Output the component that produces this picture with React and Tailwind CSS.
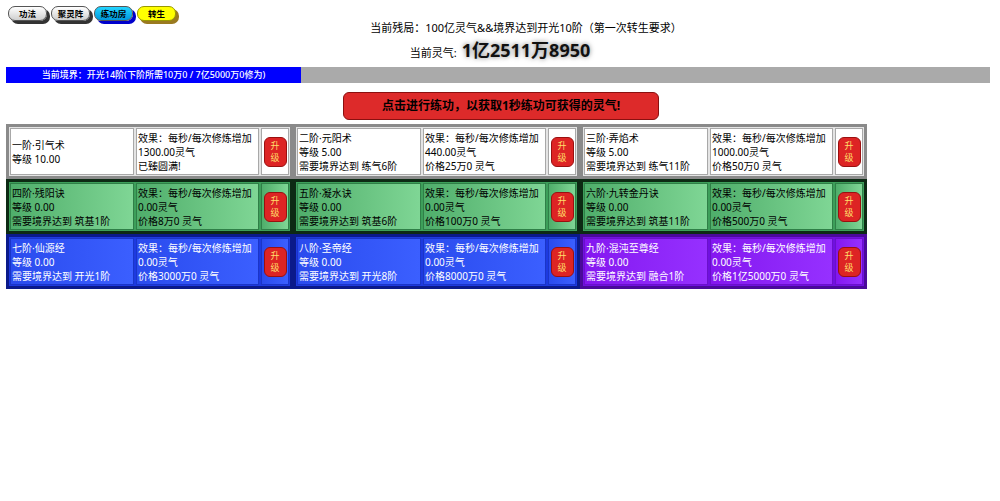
const themes = {
  white: {
    card: "border-[#8a8a8a] bg-[#e4e4e4]",
    cell: "border-[#a8a8a8] bg-white text-black",
  },
  green: {
    card: "border-[#0d2a14] bg-[#3d9f5a]",
    cell: "border-[#2f7f47] bg-gradient-to-r from-[#4fae6b] to-[#7fd695] text-black",
  },
  blue: {
    card: "border-[#0b1a8a] bg-[#1d3ae0]",
    cell: "border-[#1a35c8] bg-gradient-to-r from-[#2a4bee] to-[#3b5fff] text-white",
  },
  purple: {
    card: "border-[#4a0a9a] bg-[#7010e0]",
    cell: "border-[#6a10cc] bg-gradient-to-r from-[#8416f0] to-[#9630ff] text-white",
  },
};

const skills = [
  { name: "一阶·引气术", level: "10.00", effect: "1300.00灵气", last: "已臻圆满!", theme: "white" },
  { name: "二阶·元阳术", level: "5.00", need: "练气6阶", effect: "440.00灵气", last: "价格25万0 灵气", theme: "white" },
  { name: "三阶·弄焰术", level: "5.00", need: "练气11阶", effect: "1000.00灵气", last: "价格50万0 灵气", theme: "white" },
  { name: "四阶·残阳诀", level: "0.00", need: "筑基1阶", effect: "0.00灵气", last: "价格8万0 灵气", theme: "green" },
  { name: "五阶·凝水诀", level: "0.00", need: "筑基6阶", effect: "0.00灵气", last: "价格100万0 灵气", theme: "green" },
  { name: "六阶·九转金丹诀", level: "0.00", need: "筑基11阶", effect: "0.00灵气", last: "价格500万0 灵气", theme: "green" },
  { name: "七阶·仙源经", level: "0.00", need: "开光1阶", effect: "0.00灵气", last: "价格3000万0 灵气", theme: "blue" },
  { name: "八阶·圣帝经", level: "0.00", need: "开光8阶", effect: "0.00灵气", last: "价格8000万0 灵气", theme: "blue" },
  { name: "九阶·混沌至尊经", level: "0.00", need: "融合1阶", effect: "0.00灵气", last: "价格1亿5000万0 灵气", theme: "purple" },
];

function NavButton({ label, className }) {
  return (
    <button
      type="button"
      className={`h-[15px] w-[39px] rounded-[7px] border border-[#555] text-[8.5px] font-bold leading-[13px] ${className}`}
    >
      {label}
    </button>
  );
}

function SkillCard({ skill }) {
  const t = themes[skill.theme];
  return (
    <div className={`flex h-[55px] w-[287px] gap-[2px] border-[3px] p-[1px] ${t.card}`}>
      <div className={`flex w-[124px] flex-col justify-center border px-[1px] ${t.cell}`}>
        <p>{skill.name}</p>
        <p>等级 {skill.level}</p>
        {skill.need && <p>需要境界达到 {skill.need}</p>}
      </div>
      <div className={`flex w-[123px] flex-col justify-center overflow-hidden whitespace-nowrap border px-[1px] ${t.cell}`}>
        <p>效果：每秒/每次修炼增加</p>
        <p>{skill.effect}</p>
        <p>{skill.last}</p>
      </div>
      <div className={`flex flex-1 items-center justify-center border ${t.cell}`}>
        <button
          type="button"
          className="flex h-[30px] w-[23px] flex-col items-center justify-center rounded-[6px] border border-[#9a1010] bg-[#dd2424] text-[9px] leading-[12px] text-[#ffdf6a]"
        >
          <span>升</span>
          <span>级</span>
        </button>
      </div>
    </div>
  );
}

export default function App() {
  return (
    <div
      className="h-[501px] w-[1000px] overflow-hidden bg-white text-black"
      style={{ fontFamily: '"Noto Sans", "Noto Sans CJK SC", sans-serif' }}
    >
      <div className="flex gap-[4px] pl-[8px] pt-[6px]">
        <NavButton label="功法" className="bg-gradient-to-b from-white to-[#cfcfcf] shadow-[3px_3px_0_#333]" />
        <NavButton label="聚灵阵" className="bg-gradient-to-b from-white to-[#cfcfcf] shadow-[3px_3px_0_#333]" />
        <NavButton label="练功房" className="border-[#0055aa] bg-gradient-to-b from-[#22d4ff] to-[#0099dd] shadow-[3px_3px_0_#0000cc]" />
        <NavButton label="转生" className="border-[#999900] bg-[#ffff00] shadow-[3px_3px_0_#9a7a20]" />
      </div>

      <p className="pl-[52px] text-center text-[11px] leading-[14px]">
        当前残局：100亿灵气&&境界达到开光10阶（第一次转生要求）
      </p>

      <div className="mt-[3px] flex items-baseline justify-center gap-[5px]">
        <span className="text-[11px]">当前灵气:</span>
        <span className="text-[18px] font-bold leading-[24px] text-[#111] [text-shadow:0_0_5px_#777]">
          1亿2511万8950
        </span>
      </div>

      <div className="ml-[6px] mt-[5px] flex h-[16px] w-[984px] bg-[#aaaaaa]">
        <div className="flex w-[295px] items-center justify-center bg-[#0000ff] text-[9px] font-medium text-white">
          当前境界：开光14阶(下阶所需10万0 / 7亿5000万0修为)
        </div>
      </div>

      <button
        type="button"
        className="ml-[343px] mt-[9px] flex h-[28px] w-[316px] items-center justify-center rounded-[6px] border border-[#8a1010] bg-[#dd2a2a] text-[12px] font-bold text-black"
      >
        点击进行练功，以获取1秒练功可获得的灵气!
      </button>

      <div className="ml-[6px] mt-[4px] grid w-[861px] grid-cols-3 text-[10px] leading-[14px]">
        {skills.map((skill) => (
          <SkillCard key={skill.name} skill={skill} />
        ))}
      </div>
    </div>
  );
}
